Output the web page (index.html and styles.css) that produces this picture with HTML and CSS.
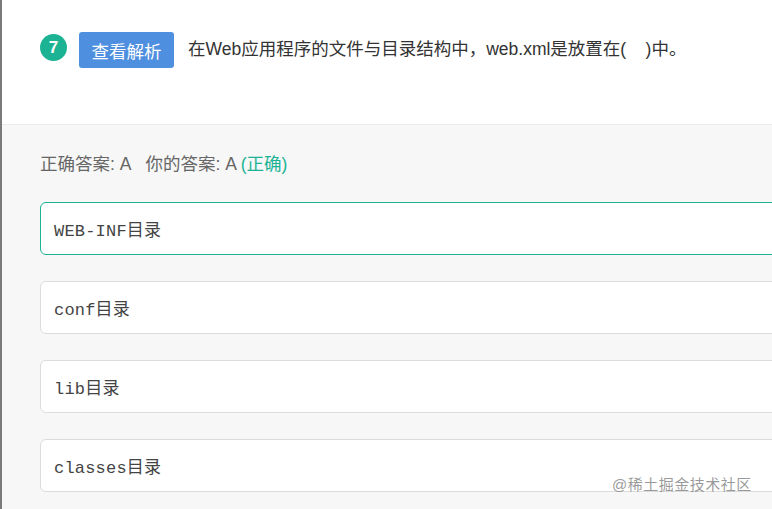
FILE: index.html
```html
<!DOCTYPE html>
<html lang="zh-CN">
<head>
<meta charset="utf-8">
<link rel="stylesheet" href="styles.css">
</head>
<body>
<div class="page">
  <div class="question">
    <span class="num">7</span>
    <span class="btn">查看解析</span>
    <span class="qtext">在Web应用程序的文件与目录结构中，web.xml是放置在(&nbsp;&nbsp;&nbsp;&nbsp;)中。</span>
  </div>
  <div class="answers">
    <div class="result">正确答案: A<span class="sep"></span>你的答案: A <span class="ok">(正确)</span></div>
    <div class="options">
      <div class="opt correct">WEB-INF目录</div>
      <div class="opt">conf目录</div>
      <div class="opt">lib目录</div>
      <div class="opt">classes目录</div>
    </div>
  </div>
  <div class="watermark">@稀土掘金技术社区</div>
</div>
</body>
</html>
```

FILE: styles.css
```css
html, body {
  margin: 0;
  padding: 0;
}
body {
  width: 772px;
  height: 509px;
  overflow: hidden;
  background: #f7f7f7;
  font-family: "Liberation Sans", "Noto Sans CJK SC", sans-serif;
}
.page {
  position: relative;
  height: 509px;
  border-left: 2px solid #7a7a7a;
  box-sizing: border-box;
}
.question {
  height: 125px;
  background: #fff;
  box-sizing: border-box;
  padding: 32px 0 0 38px;
  display: flex;
  align-items: flex-start;
  border-bottom: 1px solid #ebebeb;
}
.num {
  width: 27px;
  height: 27px;
  margin-top: 2px;
  border-radius: 50%;
  background: #1cb394;
  color: #fff;
  font-size: 17px;
  font-weight: bold;
  display: flex;
  align-items: center;
  justify-content: center;
}
.btn {
  margin-left: 12px;
  width: 95px;
  height: 36px;
  border-radius: 3px;
  background: #4f8fdf;
  color: #fff;
  font-size: 17.5px;
  display: flex;
  align-items: center;
  justify-content: center;
}
.qtext {
  margin-left: 14px;
  height: 36px;
  line-height: 34px;
  font-size: 17.5px;
  color: #333;
}
.answers {
  padding: 25px 0 0 38px;
}
.result {
  font-size: 17.5px;
  color: #666;
  height: 28px;
  line-height: 28px;
}
.sep {
  display: inline-block;
  width: 14px;
}
.ok {
  color: #1cb394;
}
.options {
  margin-top: 24px;
  display: flex;
  flex-direction: column;
  gap: 26px;
}
.opt {
  height: 53px;
  box-sizing: border-box;
  margin-right: -20px;
  background: #fff;
  border: 1px solid #dcdcdc;
  border-radius: 6px;
  padding-left: 13px;
  display: flex;
  align-items: center;
  font-family: "Liberation Mono", "Noto Sans CJK SC", monospace;
  font-size: 17px;
  letter-spacing: 0.2px;
  color: #444;
}
.opt.correct {
  border-color: #1cb394;
}
.watermark {
  position: absolute;
  left: 610px;
  top: 473px;
  font-size: 15px;
  color: rgba(120, 120, 120, 0.75);
  letter-spacing: 0.5px;
}
```
